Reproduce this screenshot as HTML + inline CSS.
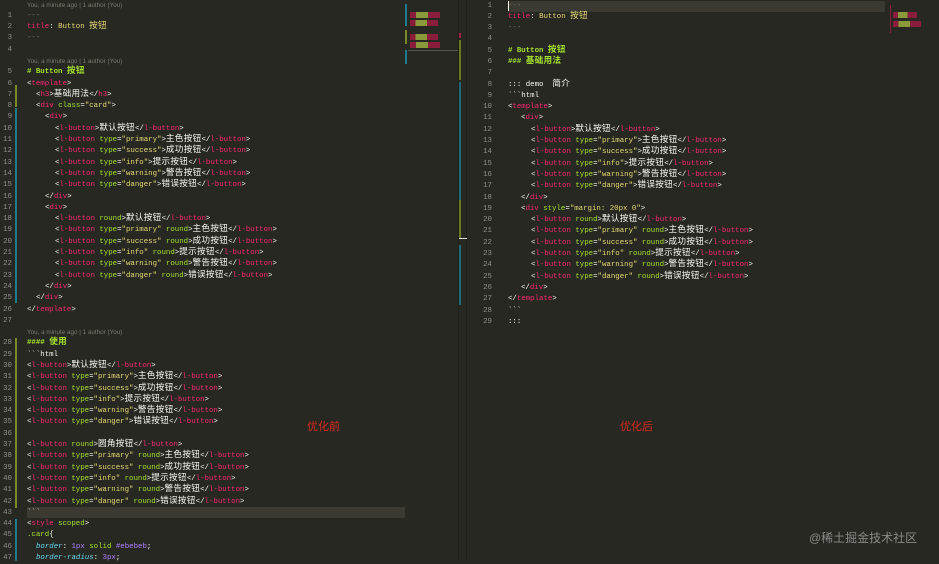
<!DOCTYPE html>
<html><head><meta charset="utf-8"><style>
*{margin:0;padding:0;box-sizing:border-box}
body{width:939px;height:561px;background:#272822;overflow:hidden;position:relative;font-family:"Liberation Mono","Noto Sans CJK SC",monospace;font-size:7.4px;color:#f8f8f2}
.pane{position:absolute;top:0}
.ln{height:11.3px;line-height:11.3px;white-space:pre;position:relative;overflow:visible}
.n{position:absolute;text-align:right;width:20px;color:#8f908a}
.ann{font-family:"Liberation Sans",sans-serif;font-size:6.3px;color:#7b7a70}
i{font-style:normal;font-family:"Noto Sans CJK SC",sans-serif;font-size:8.6px;letter-spacing:0.3px;line-height:1px}
.t{color:#f92672}.a{color:#a6e22e}.s{color:#e6db74}.g{color:#a6e22e;font-weight:bold}.c{color:#75715e}
.bar{position:absolute;width:2px}
</style></head><body>
<div style="position:absolute;left:27px;top:507px;width:378px;height:11px;background:#3b3a32"></div>
<div style="position:absolute;left:508px;top:0.5px;width:377px;height:11px;background:#3b3a32"></div>
<div style="position:absolute;left:508px;top:1px;width:1px;height:10px;background:#f8f8f0"></div>
<div class="bar" style="left:15px;top:85px;height:22px;background:#7a8a26"></div>
<div class="bar" style="left:15px;top:108px;height:195px;background:#1f7a8c"></div>
<div class="bar" style="left:15px;top:338px;height:170px;background:#7a8a26"></div>
<div class="bar" style="left:15px;top:519px;height:42px;background:#1f7a8c"></div>
<div style="position:absolute;left:458px;top:0;width:1px;height:561px;background:#1e1f1a"></div>
<div style="position:absolute;left:466px;top:0;width:1px;height:561px;background:#1e1f1a"></div>
<div class="bar" style="left:459px;top:40px;height:40px;background:#6b7a20"></div>
<div class="bar" style="left:459px;top:82px;height:118px;background:#1f6a7a"></div>
<div style="position:absolute;left:459px;top:238px;width:8px;height:1px;background:#ddd"></div>
<div class="bar" style="left:459px;top:200px;height:38px;background:#6b7a20"></div>
<div class="bar" style="left:459px;top:245px;height:60px;background:#1f6a7a"></div>
<div style="position:absolute;left:459px;top:33px;width:2px;height:5px;background:#a02040"></div>
<div style="position:absolute;left:405px;top:4px;width:2px;height:22px;background:#1f7a8c"></div>
<div style="position:absolute;left:405px;top:30px;width:2px;height:14px;background:#7a8a26"></div>
<div style="position:absolute;left:405px;top:50px;width:2px;height:14px;background:#1f7a8c"></div>
<div style="position:absolute;left:410px;top:12px;width:30px;height:6px;background:linear-gradient(90deg,#8a1c3c 20%,#8a9a3a 20%,#8a9a3a 60%,#8a1c3c 60%)"></div>
<div style="position:absolute;left:410px;top:20px;width:28px;height:6px;background:linear-gradient(90deg,#8a1c3c 20%,#8a9a3a 20%,#8a9a3a 60%,#8a1c3c 60%)"></div>
<div style="position:absolute;left:410px;top:34px;width:28px;height:6px;background:linear-gradient(90deg,#8a1c3c 20%,#8a9a3a 20%,#8a9a3a 60%,#8a1c3c 60%)"></div>
<div style="position:absolute;left:410px;top:42px;width:30px;height:6px;background:linear-gradient(90deg,#8a1c3c 20%,#8a9a3a 20%,#8a9a3a 60%,#8a1c3c 60%)"></div>
<div style="position:absolute;left:408px;top:50px;width:50px;height:1px;background:#555"></div>
<div style="position:absolute;left:893px;top:12px;width:24px;height:6px;background:linear-gradient(90deg,#8a1c3c 20%,#8a9a3a 20%,#8a9a3a 60%,#8a1c3c 60%)"></div>
<div style="position:absolute;left:893px;top:21px;width:28px;height:6px;background:linear-gradient(90deg,#8a1c3c 20%,#8a9a3a 20%,#8a9a3a 60%,#8a1c3c 60%)"></div>
<div style="position:absolute;left:890px;top:5px;width:1px;height:28px;background:#8a1c3c"></div>

<div class="pane" style="left:0;top:-0.5px;width:458px">
<div class="ln ann" style="padding-left:27px">You, a minute ago | 1 author (You)</div>
<div class="ln"><span class="n" style="left:-8px">1</span><span style="margin-left:27px" class="c">---</span></div>
<div class="ln"><span class="n" style="left:-8px">2</span><span style="margin-left:27px"><span class="t">title</span>: <span class="s">Button <i>按钮</i></span></span></div>
<div class="ln"><span class="n" style="left:-8px">3</span><span style="margin-left:27px" class="c">---</span></div>
<div class="ln"><span class="n" style="left:-8px">4</span></div>
<div class="ln ann" style="padding-left:27px">You, a minute ago | 1 author (You)</div>
<div class="ln"><span class="n" style="left:-8px">5</span><span style="margin-left:27px" class="g"># Button <i>按钮</i></span></div>
<div class="ln"><span class="n" style="left:-8px">6</span><span style="margin-left:27px">&lt;<span class="t">template</span>&gt;</span></div>
<div class="ln"><span class="n" style="left:-8px">7</span><span style="margin-left:36px">&lt;<span class="t">h3</span>&gt;<i>基础用法</i>&lt;/<span class="t">h3</span>&gt;</span></div>
<div class="ln"><span class="n" style="left:-8px">8</span><span style="margin-left:36px">&lt;<span class="t">div</span> <span class="a">class</span>=<span class="s">"card"</span>&gt;</span></div>
<div class="ln"><span class="n" style="left:-8px">9</span><span style="margin-left:45px">&lt;<span class="t">div</span>&gt;</span></div>
<div class="ln"><span class="n" style="left:-8px">10</span><span style="margin-left:55px">&lt;<span class="t">l-button</span>&gt;<i>默认按钮</i>&lt;/<span class="t">l-button</span>&gt;</span></div>
<div class="ln"><span class="n" style="left:-8px">11</span><span style="margin-left:55px">&lt;<span class="t">l-button</span> <span class="a">type</span>=<span class="s">"primary"</span>&gt;<i>主色按钮</i>&lt;/<span class="t">l-button</span>&gt;</span></div>
<div class="ln"><span class="n" style="left:-8px">12</span><span style="margin-left:55px">&lt;<span class="t">l-button</span> <span class="a">type</span>=<span class="s">"success"</span>&gt;<i>成功按钮</i>&lt;/<span class="t">l-button</span>&gt;</span></div>
<div class="ln"><span class="n" style="left:-8px">13</span><span style="margin-left:55px">&lt;<span class="t">l-button</span> <span class="a">type</span>=<span class="s">"info"</span>&gt;<i>提示按钮</i>&lt;/<span class="t">l-button</span>&gt;</span></div>
<div class="ln"><span class="n" style="left:-8px">14</span><span style="margin-left:55px">&lt;<span class="t">l-button</span> <span class="a">type</span>=<span class="s">"warning"</span>&gt;<i>警告按钮</i>&lt;/<span class="t">l-button</span>&gt;</span></div>
<div class="ln"><span class="n" style="left:-8px">15</span><span style="margin-left:55px">&lt;<span class="t">l-button</span> <span class="a">type</span>=<span class="s">"danger"</span>&gt;<i>错误按钮</i>&lt;/<span class="t">l-button</span>&gt;</span></div>
<div class="ln"><span class="n" style="left:-8px">16</span><span style="margin-left:45px">&lt;/<span class="t">div</span>&gt;</span></div>
<div class="ln"><span class="n" style="left:-8px">17</span><span style="margin-left:45px">&lt;<span class="t">div</span>&gt;</span></div>
<div class="ln"><span class="n" style="left:-8px">18</span><span style="margin-left:55px">&lt;<span class="t">l-button</span> <span class="a">round</span>&gt;<i>默认按钮</i>&lt;/<span class="t">l-button</span>&gt;</span></div>
<div class="ln"><span class="n" style="left:-8px">19</span><span style="margin-left:55px">&lt;<span class="t">l-button</span> <span class="a">type</span>=<span class="s">"primary"</span> <span class="a">round</span>&gt;<i>主色按钮</i>&lt;/<span class="t">l-button</span>&gt;</span></div>
<div class="ln"><span class="n" style="left:-8px">20</span><span style="margin-left:55px">&lt;<span class="t">l-button</span> <span class="a">type</span>=<span class="s">"success"</span> <span class="a">round</span>&gt;<i>成功按钮</i>&lt;/<span class="t">l-button</span>&gt;</span></div>
<div class="ln"><span class="n" style="left:-8px">21</span><span style="margin-left:55px">&lt;<span class="t">l-button</span> <span class="a">type</span>=<span class="s">"info"</span> <span class="a">round</span>&gt;<i>提示按钮</i>&lt;/<span class="t">l-button</span>&gt;</span></div>
<div class="ln"><span class="n" style="left:-8px">22</span><span style="margin-left:55px">&lt;<span class="t">l-button</span> <span class="a">type</span>=<span class="s">"warning"</span> <span class="a">round</span>&gt;<i>警告按钮</i>&lt;/<span class="t">l-button</span>&gt;</span></div>
<div class="ln"><span class="n" style="left:-8px">23</span><span style="margin-left:55px">&lt;<span class="t">l-button</span> <span class="a">type</span>=<span class="s">"danger"</span> <span class="a">round</span>&gt;<i>错误按钮</i>&lt;/<span class="t">l-button</span>&gt;</span></div>
<div class="ln"><span class="n" style="left:-8px">24</span><span style="margin-left:45px">&lt;/<span class="t">div</span>&gt;</span></div>
<div class="ln"><span class="n" style="left:-8px">25</span><span style="margin-left:36px">&lt;/<span class="t">div</span>&gt;</span></div>
<div class="ln"><span class="n" style="left:-8px">26</span><span style="margin-left:27px">&lt;/<span class="t">template</span>&gt;</span></div>
<div class="ln"><span class="n" style="left:-8px">27</span></div>
<div class="ln ann" style="padding-left:27px">You, a minute ago | 1 author (You)</div>
<div class="ln"><span class="n" style="left:-8px">28</span><span style="margin-left:27px" class="g">#### <i>使用</i></span></div>
<div class="ln"><span class="n" style="left:-8px">29</span><span style="margin-left:27px">&#96;&#96;&#96;html</span></div>
<div class="ln"><span class="n" style="left:-8px">30</span><span style="margin-left:27px">&lt;<span class="t">l-button</span>&gt;<i>默认按钮</i>&lt;/<span class="t">l-button</span>&gt;</span></div>
<div class="ln"><span class="n" style="left:-8px">31</span><span style="margin-left:27px">&lt;<span class="t">l-button</span> <span class="a">type</span>=<span class="s">"primary"</span>&gt;<i>主色按钮</i>&lt;/<span class="t">l-button</span>&gt;</span></div>
<div class="ln"><span class="n" style="left:-8px">32</span><span style="margin-left:27px">&lt;<span class="t">l-button</span> <span class="a">type</span>=<span class="s">"success"</span>&gt;<i>成功按钮</i>&lt;/<span class="t">l-button</span>&gt;</span></div>
<div class="ln"><span class="n" style="left:-8px">33</span><span style="margin-left:27px">&lt;<span class="t">l-button</span> <span class="a">type</span>=<span class="s">"info"</span>&gt;<i>提示按钮</i>&lt;/<span class="t">l-button</span>&gt;</span></div>
<div class="ln"><span class="n" style="left:-8px">34</span><span style="margin-left:27px">&lt;<span class="t">l-button</span> <span class="a">type</span>=<span class="s">"warning"</span>&gt;<i>警告按钮</i>&lt;/<span class="t">l-button</span>&gt;</span></div>
<div class="ln"><span class="n" style="left:-8px">35</span><span style="margin-left:27px">&lt;<span class="t">l-button</span> <span class="a">type</span>=<span class="s">"danger"</span>&gt;<i>错误按钮</i>&lt;/<span class="t">l-button</span>&gt;</span></div>
<div class="ln"><span class="n" style="left:-8px">36</span></div>
<div class="ln"><span class="n" style="left:-8px">37</span><span style="margin-left:27px">&lt;<span class="t">l-button</span> <span class="a">round</span>&gt;<i>圆角按钮</i>&lt;/<span class="t">l-button</span>&gt;</span></div>
<div class="ln"><span class="n" style="left:-8px">38</span><span style="margin-left:27px">&lt;<span class="t">l-button</span> <span class="a">type</span>=<span class="s">"primary"</span> <span class="a">round</span>&gt;<i>主色按钮</i>&lt;/<span class="t">l-button</span>&gt;</span></div>
<div class="ln"><span class="n" style="left:-8px">39</span><span style="margin-left:27px">&lt;<span class="t">l-button</span> <span class="a">type</span>=<span class="s">"success"</span> <span class="a">round</span>&gt;<i>成功按钮</i>&lt;/<span class="t">l-button</span>&gt;</span></div>
<div class="ln"><span class="n" style="left:-8px">40</span><span style="margin-left:27px">&lt;<span class="t">l-button</span> <span class="a">type</span>=<span class="s">"info"</span> <span class="a">round</span>&gt;<i>提示按钮</i>&lt;/<span class="t">l-button</span>&gt;</span></div>
<div class="ln"><span class="n" style="left:-8px">41</span><span style="margin-left:27px">&lt;<span class="t">l-button</span> <span class="a">type</span>=<span class="s">"warning"</span> <span class="a">round</span>&gt;<i>警告按钮</i>&lt;/<span class="t">l-button</span>&gt;</span></div>
<div class="ln"><span class="n" style="left:-8px">42</span><span style="margin-left:27px">&lt;<span class="t">l-button</span> <span class="a">type</span>=<span class="s">"danger"</span> <span class="a">round</span>&gt;<i>错误按钮</i>&lt;/<span class="t">l-button</span>&gt;</span></div>
<div class="ln"><span class="n" style="left:-8px">43</span><span style="margin-left:27px">&#96;&#96;&#96;</span></div>
<div class="ln"><span class="n" style="left:-8px">44</span><span style="margin-left:27px">&lt;<span class="t">style</span> <span class="a">scoped</span>&gt;</span></div>
<div class="ln"><span class="n" style="left:-8px">45</span><span style="margin-left:27px"><span class="a">.card</span>{</span></div>
<div class="ln"><span class="n" style="left:-8px">46</span><span style="margin-left:36px"><span style="color:#66d9ef;font-style:italic">border</span>: <span style="color:#ae81ff">1px</span> <span class="a">solid</span> <span style="color:#ae81ff">#ebebeb</span>;</span></div>
<div class="ln"><span class="n" style="left:-8px">47</span><span style="margin-left:36px"><span style="color:#66d9ef;font-style:italic">border-radius</span>: <span style="color:#ae81ff">3px</span>;</span></div>
</div>

<div class="pane" style="left:0;top:0.5px;width:939px">
<div class="ln"><span class="n" style="left:472px">1</span><span style="margin-left:508px" class="c">---</span></div>
<div class="ln"><span class="n" style="left:472px">2</span><span style="margin-left:508px"><span class="t">title</span>: <span class="s">Button <i>按钮</i></span></span></div>
<div class="ln"><span class="n" style="left:472px">3</span><span style="margin-left:508px" class="c">---</span></div>
<div class="ln"><span class="n" style="left:472px">4</span></div>
<div class="ln"><span class="n" style="left:472px">5</span><span style="margin-left:508px" class="g"># Button <i>按钮</i></span></div>
<div class="ln"><span class="n" style="left:472px">6</span><span style="margin-left:508px" class="g">### <i>基础用法</i></span></div>
<div class="ln"><span class="n" style="left:472px">7</span></div>
<div class="ln"><span class="n" style="left:472px">8</span><span style="margin-left:508px">::: demo  <i>简介</i></span></div>
<div class="ln"><span class="n" style="left:472px">9</span><span style="margin-left:508px">&#96;&#96;&#96;html</span></div>
<div class="ln"><span class="n" style="left:472px">10</span><span style="margin-left:508px">&lt;<span class="t">template</span>&gt;</span></div>
<div class="ln"><span class="n" style="left:472px">11</span><span style="margin-left:521px">&lt;<span class="t">div</span>&gt;</span></div>
<div class="ln"><span class="n" style="left:472px">12</span><span style="margin-left:531px">&lt;<span class="t">l-button</span>&gt;<i>默认按钮</i>&lt;/<span class="t">l-button</span>&gt;</span></div>
<div class="ln"><span class="n" style="left:472px">13</span><span style="margin-left:531px">&lt;<span class="t">l-button</span> <span class="a">type</span>=<span class="s">"primary"</span>&gt;<i>主色按钮</i>&lt;/<span class="t">l-button</span>&gt;</span></div>
<div class="ln"><span class="n" style="left:472px">14</span><span style="margin-left:531px">&lt;<span class="t">l-button</span> <span class="a">type</span>=<span class="s">"success"</span>&gt;<i>成功按钮</i>&lt;/<span class="t">l-button</span>&gt;</span></div>
<div class="ln"><span class="n" style="left:472px">15</span><span style="margin-left:531px">&lt;<span class="t">l-button</span> <span class="a">type</span>=<span class="s">"info"</span>&gt;<i>提示按钮</i>&lt;/<span class="t">l-button</span>&gt;</span></div>
<div class="ln"><span class="n" style="left:472px">16</span><span style="margin-left:531px">&lt;<span class="t">l-button</span> <span class="a">type</span>=<span class="s">"warning"</span>&gt;<i>警告按钮</i>&lt;/<span class="t">l-button</span>&gt;</span></div>
<div class="ln"><span class="n" style="left:472px">17</span><span style="margin-left:531px">&lt;<span class="t">l-button</span> <span class="a">type</span>=<span class="s">"danger"</span>&gt;<i>错误按钮</i>&lt;/<span class="t">l-button</span>&gt;</span></div>
<div class="ln"><span class="n" style="left:472px">18</span><span style="margin-left:521px">&lt;/<span class="t">div</span>&gt;</span></div>
<div class="ln"><span class="n" style="left:472px">19</span><span style="margin-left:521px">&lt;<span class="t">div</span> <span class="a">style</span>=<span class="s">"margin: 20px 0"</span>&gt;</span></div>
<div class="ln"><span class="n" style="left:472px">20</span><span style="margin-left:531px">&lt;<span class="t">l-button</span> <span class="a">round</span>&gt;<i>默认按钮</i>&lt;/<span class="t">l-button</span>&gt;</span></div>
<div class="ln"><span class="n" style="left:472px">21</span><span style="margin-left:531px">&lt;<span class="t">l-button</span> <span class="a">type</span>=<span class="s">"primary"</span> <span class="a">round</span>&gt;<i>主色按钮</i>&lt;/<span class="t">l-button</span>&gt;</span></div>
<div class="ln"><span class="n" style="left:472px">22</span><span style="margin-left:531px">&lt;<span class="t">l-button</span> <span class="a">type</span>=<span class="s">"success"</span> <span class="a">round</span>&gt;<i>成功按钮</i>&lt;/<span class="t">l-button</span>&gt;</span></div>
<div class="ln"><span class="n" style="left:472px">23</span><span style="margin-left:531px">&lt;<span class="t">l-button</span> <span class="a">type</span>=<span class="s">"info"</span> <span class="a">round</span>&gt;<i>提示按钮</i>&lt;/<span class="t">l-button</span>&gt;</span></div>
<div class="ln"><span class="n" style="left:472px">24</span><span style="margin-left:531px">&lt;<span class="t">l-button</span> <span class="a">type</span>=<span class="s">"warning"</span> <span class="a">round</span>&gt;<i>警告按钮</i>&lt;/<span class="t">l-button</span>&gt;</span></div>
<div class="ln"><span class="n" style="left:472px">25</span><span style="margin-left:531px">&lt;<span class="t">l-button</span> <span class="a">type</span>=<span class="s">"danger"</span> <span class="a">round</span>&gt;<i>错误按钮</i>&lt;/<span class="t">l-button</span>&gt;</span></div>
<div class="ln"><span class="n" style="left:472px">26</span><span style="margin-left:521px">&lt;/<span class="t">div</span>&gt;</span></div>
<div class="ln"><span class="n" style="left:472px">27</span><span style="margin-left:508px">&lt;/<span class="t">template</span>&gt;</span></div>
<div class="ln"><span class="n" style="left:472px">28</span><span style="margin-left:508px">&#96;&#96;&#96;</span></div>
<div class="ln"><span class="n" style="left:472px">29</span><span style="margin-left:508px">:::</span></div>
</div>

<div style="position:absolute;left:307px;top:418px;color:#d8281e;font-family:'Noto Sans CJK SC',sans-serif;font-size:11px">优化前</div>
<div style="position:absolute;left:620px;top:418px;color:#d8281e;font-family:'Noto Sans CJK SC',sans-serif;font-size:11px">优化后</div>
<div style="position:absolute;left:809px;top:529px;color:#8a8a86;font-family:'Liberation Sans','Noto Sans CJK SC',sans-serif;font-size:12px">@稀土掘金技术社区</div>
</body></html>
